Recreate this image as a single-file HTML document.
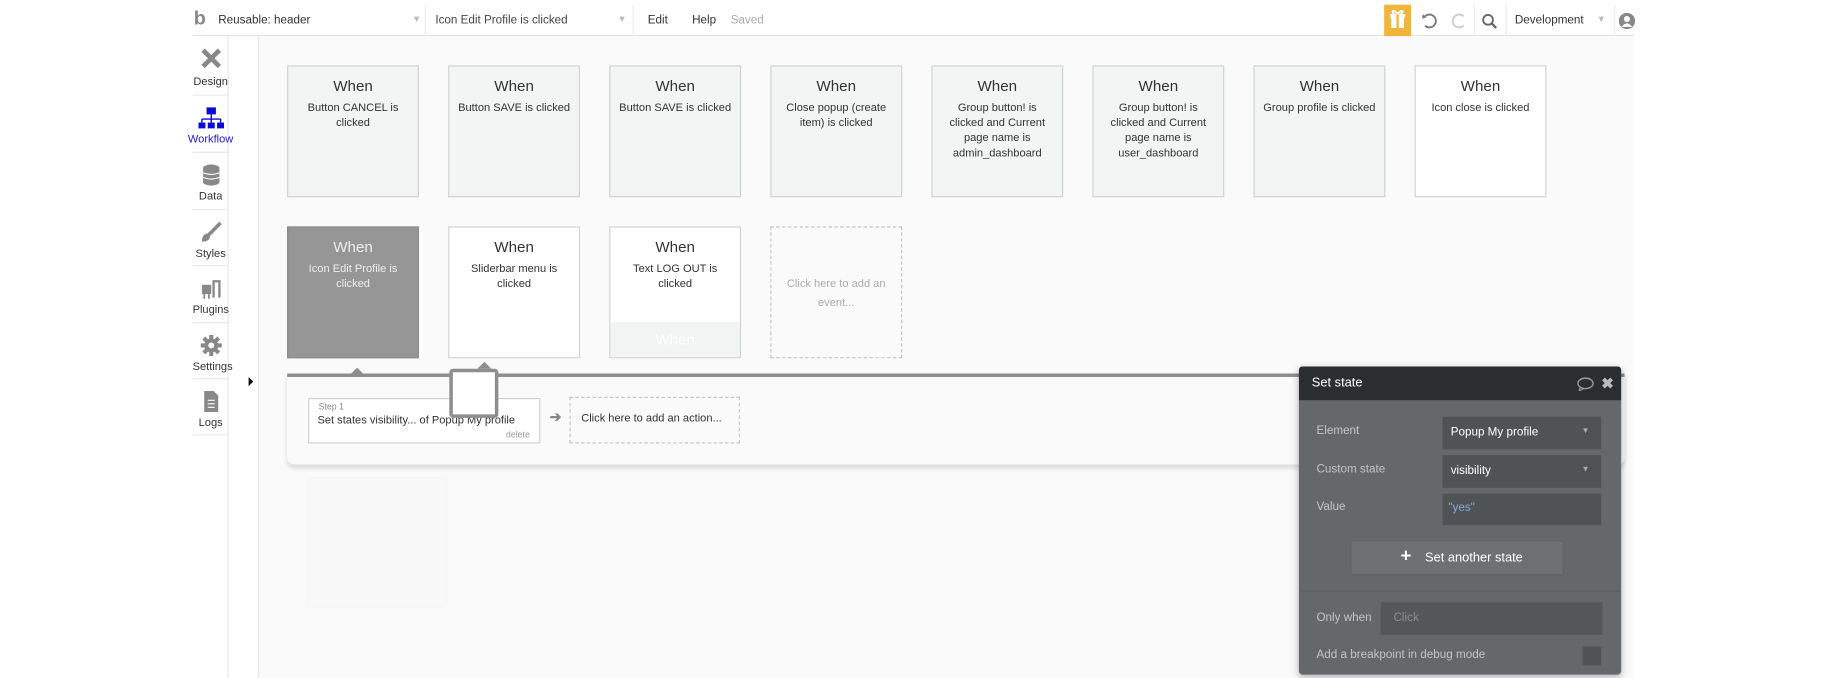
<!DOCTYPE html>
<html><head><meta charset="utf-8"><style>
*{box-sizing:border-box;margin:0;padding:0}
body{width:1830px;height:678px;overflow:hidden;background:#fff;font-family:"Liberation Sans",sans-serif;}
#w{position:absolute;left:0;top:0;width:1568px;height:581px;transform:scale(1.16709);transform-origin:0 0;}
.a{position:absolute}
.hdr{left:165px;top:4px;width:1235px;height:27px;border-bottom:1px solid #e3e3e3;background:#fff;font-size:10px;color:#333}
.sb{left:165px;top:31px;width:31px;height:550px;background:#fff;border-right:1px solid #e8e8e8}
.sbi{position:absolute;left:0;width:31px;text-align:center;font-size:9.5px;color:#333;border-bottom:1px solid #e8e8e8}
.cv{left:221px;top:31px;width:1179px;height:550px;background:#fafafa;border-left:1px solid #e6e6e6}
.card{position:absolute;width:113px;height:113px;border:1px solid #cfd3d5;background:#f3f4f4;text-align:center;color:#333;font-size:9.5px;line-height:13px;padding:0 9px}
.card b{display:block;font-weight:normal;font-size:13px;margin:9px 0 4px;line-height:16px}
</style></head><body><div id="w">
<div class="a hdr">
 <div class="a" style="left:1px;top:2px;font-size:17px;color:#888;font-weight:bold">b</div>
 <div class="a" style="left:22px;top:8px">Reusable: header</div>
 <div class="a" style="left:188px;top:8px;color:#bbb;font-size:8px">▼</div>
 <div class="a" style="left:199px;top:0;height:26px;border-left:1px solid #eee"></div>
 <div class="a" style="left:208px;top:8px;color:#444">Icon Edit Profile is clicked</div>
 <div class="a" style="left:364px;top:8px;color:#bbb;font-size:8px">▼</div>
 <div class="a" style="left:377px;top:0;height:26px;border-left:1px solid #eee"></div>
 <div class="a" style="left:390px;top:8px">Edit</div>
 <div class="a" style="left:428px;top:8px">Help</div>
 <div class="a" style="left:461px;top:8px;color:#aaa">Saved</div>
 <div class="a" style="left:1021px;top:0;width:23px;height:27px;background:#f1b43d"><svg width="23" height="27"><rect x="6" y="10" width="11" height="10" fill="#fff"/><rect x="5" y="8" width="13" height="3" fill="#fff"/><rect x="10.5" y="8" width="2" height="12" fill="#f1b43d"/><path d="M11.5 8 C8 3 5 6 9 8 M11.5 8 C15 3 18 6 14 8" stroke="#fff" stroke-width="1.5" fill="none"/></svg></div>
 <svg class="a" style="left:1052px;top:6px" width="16" height="16"><path d="M4 4 A5.5 5.5 0 1 1 4 12" stroke="#777" stroke-width="1.6" fill="none"/><path d="M2 2 L5 5 L1.5 6z" fill="#777"/></svg>
 <svg class="a" style="left:1077px;top:6px" width="16" height="16"><path d="M12 4 A5.5 5.5 0 1 0 12 12" stroke="#ccc" stroke-width="1.6" fill="none"/></svg>
 <div class="a" style="left:1098px;top:0;height:26px;border-left:1px solid #eee"></div>
 <svg class="a" style="left:1104px;top:7px" width="15" height="15"><circle cx="6" cy="6" r="4.2" stroke="#666" stroke-width="1.6" fill="none"/><path d="M9 9 L13 13" stroke="#666" stroke-width="2"/></svg>
 <div class="a" style="left:1125px;top:0;height:26px;border-left:1px solid #eee"></div>
 <div class="a" style="left:1133px;top:8px">Development</div>
 <div class="a" style="left:1203px;top:8px;color:#bbb;font-size:8px">▼</div>
 <div class="a" style="left:1218px;top:0;height:26px;border-left:1px solid #eee"></div>
 <svg class="a" style="left:1222px;top:7px" width="14" height="14"><circle cx="7" cy="7" r="7" fill="#888"/><circle cx="7" cy="5.3" r="2.6" fill="#fff"/><path d="M2.5 12 Q7 6 11.5 12z" fill="#fff"/></svg>
</div>
<div class="a sb">
 <div class="sbi" style="top:0;height:51px"><svg width="20" height="20" style="margin-top:9px"><path d="M3 3 L17 17 M17 3 L3 17" stroke="#888" stroke-width="4"/></svg><div style="margin-top:2px">Design</div></div>
 <div class="sbi" style="top:51px;height:49px;color:#1a1acc"><svg width="22" height="20" style="margin-top:9px"><rect x="7" y="1" width="8" height="6" fill="#0a0ad8"/><path d="M11 7v4M3 11h16M3 11v3M11 11v3M19 11v3" stroke="#0a0ad8" stroke-width="1.2"/><rect x="0" y="14" width="6" height="5" fill="#0a0ad8"/><rect x="8" y="14" width="6" height="5" fill="#0a0ad8"/><rect x="16" y="14" width="6" height="5" fill="#0a0ad8"/></svg><div style="margin-left:-4px">Workflow</div></div>
 <div class="sbi" style="top:100px;height:49px"><svg width="16" height="20" style="margin-top:9px"><ellipse cx="8" cy="4" rx="7" ry="3" fill="#888"/><rect x="1" y="4" width="14" height="12" fill="#888"/><ellipse cx="8" cy="16" rx="7" ry="3" fill="#888"/><path d="M1 8 Q8 11 15 8 M1 12 Q8 15 15 12" stroke="#fff" fill="none"/></svg><div>Data</div></div>
 <div class="sbi" style="top:149px;height:48px"><svg width="20" height="20" style="margin-top:9px"><path d="M18 2 L8 12" stroke="#888" stroke-width="3"/><path d="M8 11 Q2 11 2 18 Q9 18 9 13z" fill="#888"/></svg><div>Styles</div></div>
 <div class="sbi" style="top:197px;height:49px"><svg width="20" height="20" style="margin-top:9px"><rect x="2" y="7" width="8" height="8" fill="#888"/><path d="M4 15v4M8 15v4" stroke="#888" stroke-width="1.5"/><path d="M12 18V4h5v14" stroke="#888" stroke-width="2" fill="none"/></svg><div>Plugins</div></div>
 <div class="sbi" style="top:246px;height:48px"><svg width="20" height="20" style="margin-top:9px"><circle cx="10" cy="10" r="6" fill="#888"/><path d="M10 1v18M1 10h18M3.6 3.6l12.8 12.8M16.4 3.6L3.6 16.4" stroke="#888" stroke-width="3.5"/><circle cx="10" cy="10" r="2.5" fill="#fff"/></svg><div>Settings</div></div>
 <div class="sbi" style="top:294px;height:48px"><svg width="16" height="20" style="margin-top:9px"><path d="M2 1h8l4 4v14H2z" fill="#888"/><path d="M5 9h6M5 12h6M5 15h6" stroke="#fff"/></svg><div>Logs</div></div>
</div>
<div class="a" style="left:213px;top:323px;width:0;height:0;border-left:4px solid #111;border-top:4px solid transparent;border-bottom:4px solid transparent"></div>
<div class="a cv"></div>
<div class="card" style="left:246px;top:56px"><b>When</b>Button CANCEL is clicked</div>
<div class="card" style="left:384px;top:56px;padding:0 3px"><b>When</b>Button SAVE is clicked</div>
<div class="card" style="left:522px;top:56px;padding:0 3px"><b>When</b>Button SAVE is clicked</div>
<div class="card" style="left:660px;top:56px"><b>When</b>Close popup (create item) is clicked</div>
<div class="card" style="left:798px;top:56px;padding:0 14px"><b>When</b>Group button! is clicked and Current page name is admin_dashboard</div>
<div class="card" style="left:936px;top:56px;padding:0 14px"><b>When</b>Group button! is clicked and Current page name is user_dashboard</div>
<div class="card" style="left:1074px;top:56px;padding:0 4px"><b>When</b>Group profile is clicked</div>
<div class="card" style="left:1212px;top:56px;background:#fff"><b>When</b>Icon close is clicked</div>
<div class="card" style="left:246px;top:194px;background:#969696;border-color:#8a8a8a;color:#eee"><b>When</b>Icon Edit Profile is clicked</div>
<div class="card" style="left:384px;top:194px;background:#fff"><b>When</b>Sliderbar menu is clicked</div>
<div class="card" style="left:522px;top:194px;background:#fff"><b>When</b>Text LOG OUT is clicked<div style="position:absolute;left:0;right:0;bottom:0;height:30px;background:#f2f3f3;color:#fff;font-size:13px;line-height:30px">When</div></div>
<div class="card" style="left:660px;top:194px;background:#fafafa;border:1px dashed #c6c6c6;color:#aaa;padding-top:41px;line-height:16px">Click here to add an event...</div>
<div class="a" style="left:246px;top:320px;width:1146px;height:78px;background:#fafafa;border-top:3px solid #8e8e8e;box-shadow:0 3px 4px rgba(0,0,0,.12);border-radius:0 0 6px 6px"></div>
<div class="a" style="left:300px;top:315px;border-left:6px solid transparent;border-right:6px solid transparent;border-bottom:6px solid #8e8e8e"></div>
<div class="a" style="left:264px;top:341px;width:199px;height:39px;background:#fff;border:1px solid #d0d0d0;font-size:9.5px;color:#333">
 <div class="a" style="left:8px;top:2px;font-size:7.5px;color:#888">Step 1</div>
 <div class="a" style="left:7px;top:13px;white-space:nowrap">Set states visibility... of Popup My profile</div>
 <div class="a" style="right:8px;top:26px;font-size:7.5px;color:#999">delete</div>
</div>
<div class="a" style="left:385px;top:316px;width:42px;height:42px;background:#fff;border:3px solid #8e8e8e;border-radius:3px"></div>
<div class="a" style="left:409px;top:310px;border-left:6px solid transparent;border-right:6px solid transparent;border-bottom:6px solid #8e8e8e"></div>
<div class="a" style="left:471px;top:350px;font-size:12px;color:#888;font-weight:bold">➔</div>
<div class="a" style="left:488px;top:340px;width:146px;height:40px;border:1px dashed #c0c6cc;font-size:9.5px;color:#333;padding:12px 0 0 9px">Click here to add an action...</div>
<div class="a" style="left:264px;top:410px;width:118px;height:110px;background:#f8f8f8;box-shadow:0 0 3px rgba(0,0,0,.05)"></div>
<div class="a" style="left:1113px;top:314px;width:276px;height:264px;background:#65686a;border-radius:3px;box-shadow:0 2px 6px rgba(0,0,0,.3);font-size:10px;color:#c2c4c5">
 <div class="a" style="left:0;top:0;width:276px;height:29px;background:#2b2e31;border-radius:3px 3px 0 0;color:#fff;font-size:11px;padding:8px 0 0 11px">Set state</div>
 <svg class="a" style="left:238px;top:9px" width="15" height="12"><ellipse cx="7.5" cy="5.5" rx="6.5" ry="4.5" stroke="#999" fill="none" stroke-width="1.2"/><path d="M3 9 L2 12 L6 10" stroke="#999" fill="none"/></svg>
 <div class="a" style="left:259px;top:7px;color:#bbb;font-size:13px;font-weight:bold">✖</div>
 <div class="a" style="left:15px;top:50px">Element</div>
 <div class="a" style="left:123px;top:43px;width:136px;height:28px;background:#505356;color:#fff;padding:8px 0 0 7px">Popup My profile<span style="position:absolute;right:10px;top:9px;font-size:7px;color:#aaa">▼</span></div>
 <div class="a" style="left:15px;top:83px">Custom state</div>
 <div class="a" style="left:123px;top:76px;width:136px;height:28px;background:#505356;color:#fff;padding:8px 0 0 7px">visibility<span style="position:absolute;right:10px;top:9px;font-size:7px;color:#aaa">▼</span></div>
 <div class="a" style="left:15px;top:115px">Value</div>
 <div class="a" style="left:123px;top:109px;width:136px;height:27px;background:#505356;color:#7fa8ea;padding:7px 0 0 5px">"yes"</div>
 <div class="a" style="left:44px;top:149px;width:183px;height:30px;background:#6e7173;border:1px solid #5f6264;color:#fff;font-size:11px;padding:8px 0 0 43px"><span style="font-size:16px;font-weight:bold;position:absolute;left:42px;top:4px">+</span><span style="margin-left:20px">Set another state</span></div>
 <div class="a" style="left:0;top:192px;width:276px;border-top:1px solid #5c5f61"></div>
 <div class="a" style="left:15px;top:210px">Only when</div>
 <div class="a" style="left:70px;top:202px;width:190px;height:28px;background:#54575a;color:#8a8d8f;padding:8px 0 0 11px">Click</div>
 <div class="a" style="left:15px;top:242px">Add a breakpoint in debug mode</div>
 <div class="a" style="left:243px;top:240px;width:16px;height:16px;background:#505356"></div>
</div>
</div></body></html>
